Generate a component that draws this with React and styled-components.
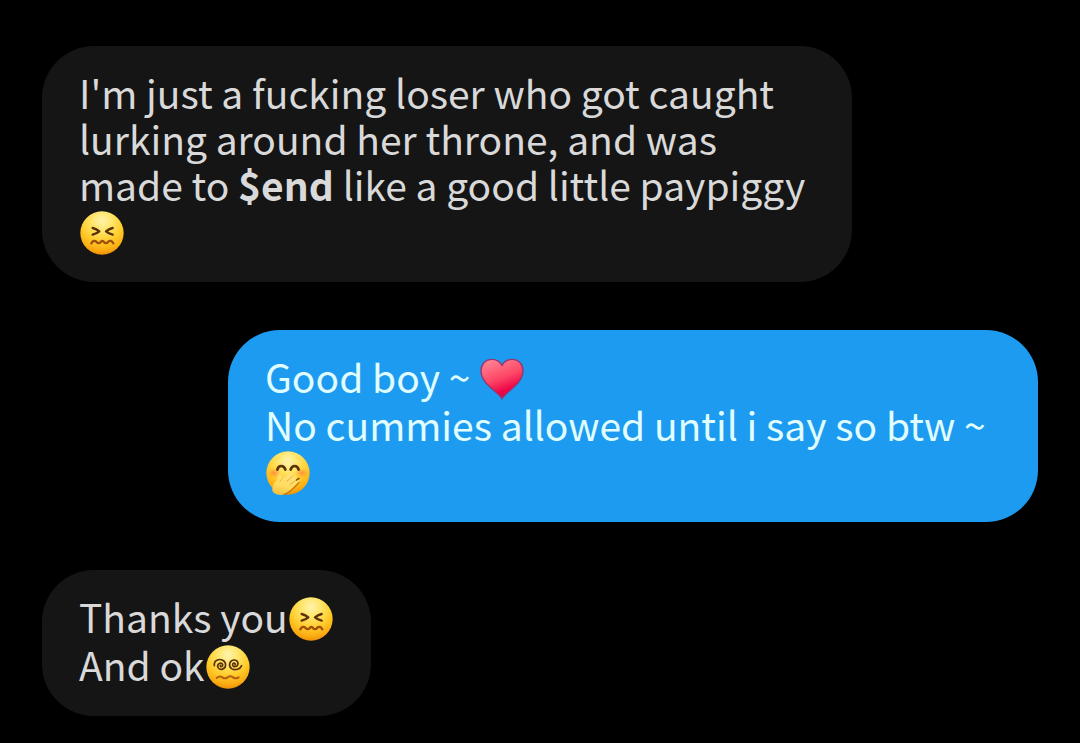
import styled, { createGlobalStyle } from 'styled-components';

const App = () => {
  return (
    <>
      <GlobalStyle />
      <EmojiGradients />
      <Conversation>
        <Message>
          I'm just a fucking loser who got caught lurking around her throne, and
          was made to <strong>$end</strong> like a good little paypiggy{' '}
          <Confounded />
        </Message>
        <Message $mine>
          Good boy ~ <Heart />
          <br />
          No cummies allowed until i say so btw ~ <HandOverMouth />
        </Message>
        <Message>
          Thanks you
          <Confounded />
          <br />
          And ok
          <SpiralEyes />
        </Message>
      </Conversation>
    </>
  );
};

const EmojiGradients = () => (
  <Defs aria-hidden="true">
    <defs>
      <radialGradient id="face" cx="50%" cy="22%" r="80%">
        <stop offset="0" stopColor="#fff3ae" />
        <stop offset="0.3" stopColor="#ffe568" />
        <stop offset="0.62" stopColor="#ffca28" />
        <stop offset="0.85" stopColor="#fbac12" />
        <stop offset="1" stopColor="#e98a06" />
      </radialGradient>
      <radialGradient id="blush">
        <stop offset="0" stopColor="#ff7a3c" stopOpacity="0.75" />
        <stop offset="1" stopColor="#ff8a3c" stopOpacity="0" />
      </radialGradient>
      <linearGradient id="hand" x1="0.7" y1="0" x2="0.3" y2="1">
        <stop offset="0" stopColor="#ffe27a" />
        <stop offset="0.6" stopColor="#ffdc62" />
        <stop offset="1" stopColor="#f8c03a" />
      </linearGradient>
      <linearGradient id="heart" x1="0.2" y1="0" x2="0.6" y2="1">
        <stop offset="0" stopColor="#ff8593" />
        <stop offset="0.5" stopColor="#fd4766" />
        <stop offset="0.8" stopColor="#ee0648" />
        <stop offset="1" stopColor="#dc0844" />
      </linearGradient>
    </defs>
  </Defs>
);

const Confounded = () => (
  <Emoji viewBox="0 0 132 132" role="img" aria-label="confounded face">
    <circle cx="66" cy="66" r="65" fill="url(#face)" />
    <Stroke $width={7} d="M38 51 Q50 54 58 61 Q50 68 38 71" />
    <Stroke $width={7} d="M98 51 Q86 54 78 61 Q86 68 98 71" />
    <Stroke
      $color="#a04f0c"
      $width={7}
      d="M34 97 Q41 85 49 92 Q56 101 63 92 Q67 88 71 92 Q78 101 85 92 Q93 85 100 97"
    />
  </Emoji>
);

const SpiralEyes = () => (
  <Emoji viewBox="0 0 132 132" role="img" aria-label="face with spiral eyes">
    <circle cx="66" cy="66" r="65" fill="url(#face)" />
    <Stroke
      $width={5}
      d="M25 62 C23 46 39 40 50 46 C63 53 61 70 48 73 C36 75 31 62 39 56 C47 51 54 60 48 64 C45 66 42 64 43 61"
    />
    <Stroke
      $width={5}
      d="M107 62 C103 72 88 78 77 71 C66 63 70 47 83 45 C96 44 100 58 91 64 C83 68 76 59 82 55 C86 53 89 56 87 59"
    />
    <Stroke
      $color="#b8600f"
      d="M32 99 Q41 91 49 97 Q57 103 65 97 Q73 91 81 97 Q89 103 98 97"
    />
  </Emoji>
);

const HandOverMouth = () => (
  <Emoji viewBox="0 0 132 132" role="img" aria-label="face with hand over mouth">
    <circle cx="66" cy="66" r="65" fill="url(#face)" />
    <ellipse cx="24" cy="66" rx="20" ry="15" fill="url(#blush)" />
    <ellipse cx="108" cy="66" rx="20" ry="15" fill="url(#blush)" />
    <Stroke $width={8} d="M34 56 Q36 45 46 45 Q55 45 58 56" />
    <Stroke $width={8} d="M74 56 Q77 45 86 45 Q95 45 98 56" />
    <path
      d="M54 130 C72 126 84 110 99 94 C103 88 97 83 91 86 L88 84 C93 76 86 71 81 75 C83 67 75 64 70 69 L48 84 C48 77 46 69 39 70 C34 71 36 81 33 88 C24 96 18 106 19 117 C20 128 38 135 54 130 Z"
      fill="url(#hand)"
    />
    <Stroke $color="#ecae3a" $width={3} d="M81 75 L62 91 M91 86 L72 101 M48 84 L41 91" />
    <Stroke $color="#7a3f08" $width={4} d="M92 87 L99 82" />
    <Stroke $color="#c97808" $width={4} d="M54 130 C72 126 84 110 99 94" />
  </Emoji>
);

const Heart = () => (
  <Emoji viewBox="0 0 132 132" role="img" aria-label="red heart">
    <path
      d="M66 125 C58 112 42 102 27 87 C12 73 3 58 3 41 C3 21 17 7 35 7 C49 7 60 14 66 25 C72 14 83 7 97 7 C115 7 129 21 129 41 C129 58 120 73 105 87 C90 102 74 112 66 125 Z"
      fill="url(#heart)"
      stroke="#94376f"
      strokeWidth="4"
    />
  </Emoji>
);

const GlobalStyle = createGlobalStyle`
  body {
    margin: 0;
    background-color: #000;
  }
`;

const Defs = styled.svg`
  position: absolute;
  width: 0;
  height: 0;
`;

const Conversation = styled.main`
  display: flex;
  flex-direction: column;
  align-items: flex-start;
  gap: 48px;
  padding: 46px 42px 26px;
  font-family: 'Noto Sans CJK JP', 'Open Sans', sans-serif;
`;

const Message = styled.p`
  box-sizing: border-box;
  max-width: 75vw;
  margin: 0;
  padding: 23px 37px 27px;
  align-self: ${({ $mine }) => ($mine ? 'flex-end' : 'flex-start')};
  border-radius: 52px;
  background-color: ${({ $mine }) => ($mine ? '#1d9bf0' : '#151515')};
  color: ${({ $mine }) => ($mine ? '#e0fdff' : '#d9d9d9')};
  font-size: 39px;
  line-height: 46px;
`;

const Emoji = styled.svg`
  width: 44px;
  height: 44px;
  margin: 0 1px;
  vertical-align: -8px;
`;

const Stroke = styled.path`
  fill: none;
  stroke: ${({ $color }) => $color || '#5b3208'};
  stroke-width: ${({ $width }) => $width || 6}px;
  stroke-linecap: round;
  stroke-linejoin: round;
`;

export default App;
